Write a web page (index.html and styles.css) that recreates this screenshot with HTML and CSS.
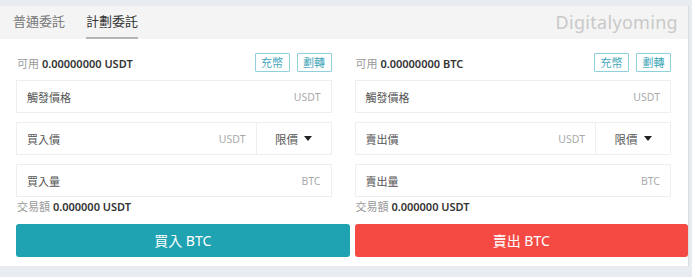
FILE: index.html
```html
<!DOCTYPE html>
<html>
<head>
<meta charset="utf-8">
<link rel="stylesheet" href="styles.css">
</head>
<body>
<div class="panel">
  <div class="head">
    <div class="tabs">
      <span class="tab">普通委託</span>
      <span class="tab active">計劃委託</span>
    </div>
    <div class="brand">Digitalyoming</div>
  </div>
  <div class="body">
    <div class="col">
      <div class="bal-row">
        <div class="bal"><span class="lbl">可用</span> <b>0.00000000 USDT</b></div>
        <div class="btns"><span class="sbtn">充幣</span><span class="sbtn">劃轉</span></div>
      </div>
      <div class="field"><span class="flabel">觸發價格</span><span class="unit">USDT</span></div>
      <div class="field split">
        <div class="main"><span class="flabel">買入價</span><span class="unit">USDT</span></div>
        <div class="sel">限價 <span class="caret"></span></div>
      </div>
      <div class="field"><span class="flabel">買入量</span><span class="unit">BTC</span></div>
      <div class="total"><span class="lbl">交易額</span> <b>0.000000 USDT</b></div>
      <div class="action buy">買入 BTC</div>
    </div>
    <div class="col">
      <div class="bal-row">
        <div class="bal"><span class="lbl">可用</span> <b>0.00000000 BTC</b></div>
        <div class="btns"><span class="sbtn">充幣</span><span class="sbtn">劃轉</span></div>
      </div>
      <div class="field"><span class="flabel">觸發價格</span><span class="unit">USDT</span></div>
      <div class="field split">
        <div class="main"><span class="flabel">賣出價</span><span class="unit">USDT</span></div>
        <div class="sel">限價 <span class="caret"></span></div>
      </div>
      <div class="field"><span class="flabel">賣出量</span><span class="unit">BTC</span></div>
      <div class="total"><span class="lbl">交易額</span> <b>0.000000 USDT</b></div>
      <div class="action sell">賣出 BTC</div>
    </div>
  </div>
</div>
</body>
</html>
```
FILE: styles.css
```css
html, body {
  margin: 0;
  padding: 0;
}
body {
  background: #e8ebef;
  font-family: "Noto Sans", "Noto Sans CJK TC", sans-serif;
  width: 692px;
  height: 277px;
  overflow: hidden;
  padding-top: 6px;
  box-sizing: border-box;
}
.panel {
  width: 689px;
  background: #fff;
  border-right: 1px solid #d9dce0;
  box-sizing: border-box;
}
.head {
  height: 33px;
  background: #f4f4f4;
  display: flex;
  justify-content: space-between;
  align-items: stretch;
}
.tabs {
  display: flex;
  padding-left: 13px;
  gap: 21px;
}
.tab {
  font-size: 13px;
  color: #777;
  line-height: 28px;
  border-bottom: 2px solid transparent;
  height: 33px;
  box-sizing: border-box;
  padding-top: 1px;
}
.tab.active {
  color: #333;
  border-bottom-color: #b5b5b5;
}
.brand {
  font-size: 18px;
  color: #c9c9c9;
  line-height: 33px;
  padding-right: 10px;
  letter-spacing: 0.3px;
}
.body {
  display: flex;
  gap: 5px;
  padding: 14px 0 9px 16px;
}
.col {
  width: 334px;
  display: flex;
  flex-direction: column;
}
.bal-row, .field, .total {
  margin-right: 18px;
}
.col + .col .bal-row, .col + .col .field, .col + .col .total {
  margin-right: 17px;
}
.bal-row {
  display: flex;
  justify-content: space-between;
  align-items: center;
  height: 19px;
}
.bal {
  font-size: 11px;
  color: #333;
  padding-left: 1px;
}
.bal b, .total b {
  font-weight: 600;
  color: #333;
}
.lbl {
  color: #999;
}
.btns {
  display: flex;
  gap: 7px;
}
.sbtn {
  font-size: 11px;
  color: #3fa6b8;
  border: 1px solid #8fd0db;
  height: 19px;
  width: 35px;
  text-align: center;
  line-height: 17px;
  box-sizing: border-box;
  border-radius: 1px;
}
.field {
  margin-top: 8px;
  height: 33px;
  border: 1px solid #eeeeee;
  box-sizing: border-box;
  display: flex;
  align-items: center;
  justify-content: space-between;
  padding: 0 10px;
  font-size: 11px;
}
.field + .field {
  margin-top: 9px;
}
.flabel {
  color: #555;
}
.unit {
  color: #aaa;
  font-size: 10.5px;
}
.field.split {
  padding: 0;
}
.split .main {
  flex: 1;
  display: flex;
  justify-content: space-between;
  align-items: center;
  padding: 0 10px;
  height: 100%;
}
.sel {
  width: 75px;
  height: 100%;
  border-left: 1px solid #eeeeee;
  display: flex;
  align-items: center;
  justify-content: center;
  gap: 6px;
  color: #555;
  font-size: 11.5px;
  box-sizing: border-box;
}
.caret {
  width: 0;
  height: 0;
  border-left: 4px solid transparent;
  border-right: 4px solid transparent;
  border-top: 5px solid #222;
}
.total {
  font-size: 11px;
  height: 16px;
  line-height: 16px;
  margin-top: 2px;
  padding-left: 1px;
  color: #333;
}
.action {
  margin-top: 9px;
  height: 33px;
  line-height: 33px;
  text-align: center;
  color: #fff;
  font-size: 14px;
  font-weight: 400;
  border-radius: 3px;
}
.buy {
  background: #1fa2b2;
}
.sell {
  background: #f44a43;
}
```
